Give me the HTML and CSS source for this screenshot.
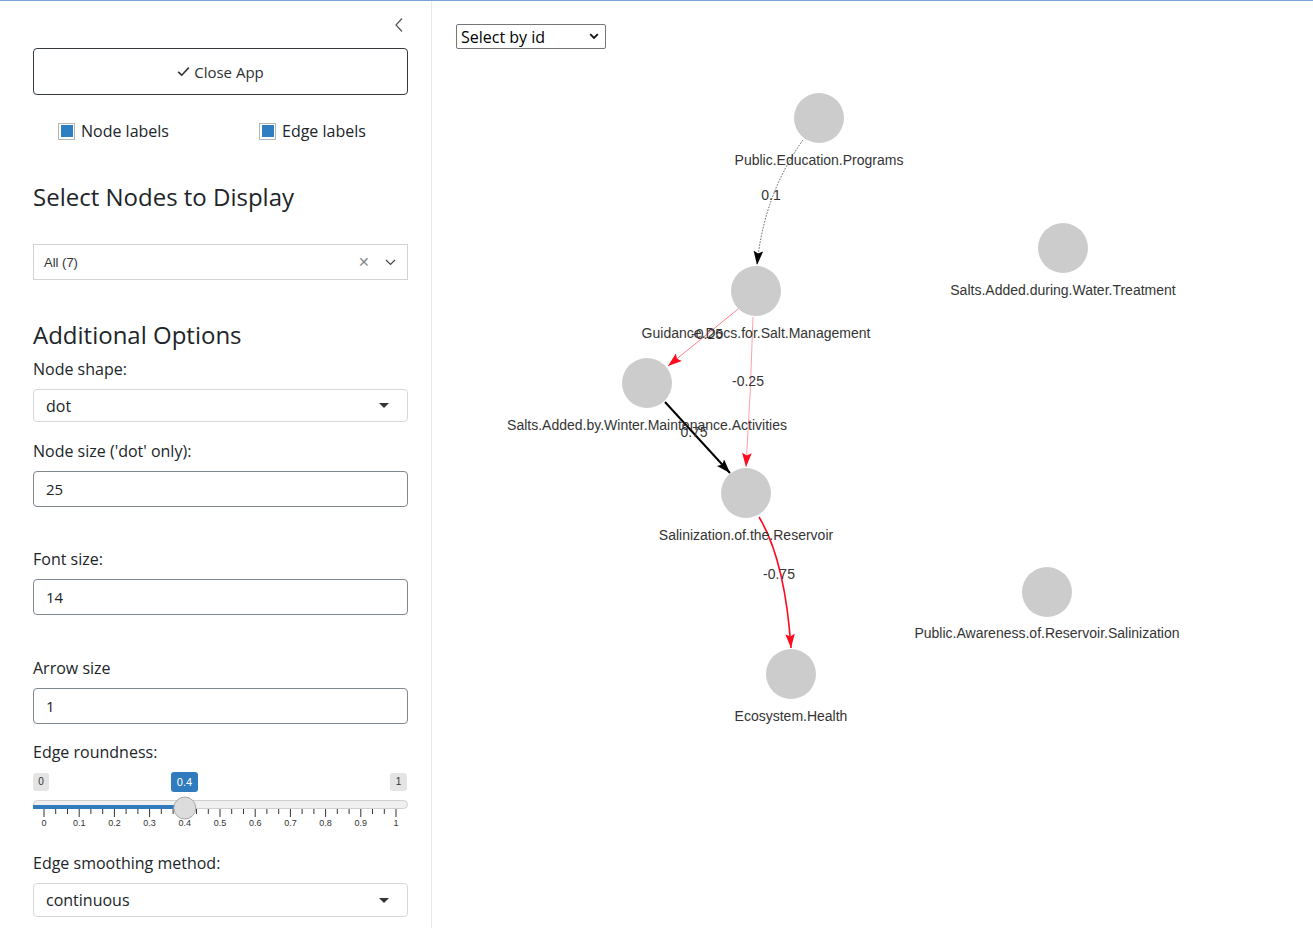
FILE: index.html
```html
<!DOCTYPE html>
<html>
<head>
<meta charset="utf-8">
<title>Network App</title>
<link rel="stylesheet" href="styles.css">
</head>
<body>
<div class="topline"></div>
<div class="app">
  <aside class="sidebar">
    <div class="collapse-row">
      <svg class="chev-left" width="10" height="16" viewBox="0 0 10 16"><path d="M8 1.5 L2 8 L8 14.5" fill="none" stroke="#555" stroke-width="1.2"/></svg>
    </div>
    <button class="btn-close"><svg class="check-ic" width="13" height="11" viewBox="0 0 13 11"><path d="M1.2 5.8 L4.8 9.2 L11.8 1.6" fill="none" stroke="#333" stroke-width="1.6"/></svg>Close App</button>

    <div class="check-row">
      <label class="cb"><span class="cb-box"><span class="cb-fill"></span></span>Node labels</label>
      <label class="cb"><span class="cb-box"><span class="cb-fill"></span></span>Edge labels</label>
    </div>

    <h2 class="heading first">Select Nodes to Display</h2>
    <div class="vselect">
      <span class="vselect-text">All (7)</span>
      <span class="vselect-x">✕</span>
      <svg class="vselect-chev" width="11" height="7" viewBox="0 0 11 7"><path d="M1 1 L5.5 5.5 L10 1" fill="none" stroke="#444" stroke-width="1.2"/></svg>
    </div>

    <h2 class="heading second">Additional Options</h2>

    <div class="lbl lbl-first">Node shape:</div>
    <div class="sel"><span>dot</span><span class="caret"></span></div>

    <div class="lbl lbl-gap-s">Node size ('dot' only):</div>
    <div class="inp">25</div>

    <div class="lbl lbl-gap-l">Font size:</div>
    <div class="inp">14</div>

    <div class="lbl lbl-gap-l2">Arrow size</div>
    <div class="inp">1</div>

    <div class="lbl lbl-gap-m">Edge roundness:</div>
    <div class="slider">
      <svg width="375" height="87" viewBox="0 0 375 87">
        <rect x="0" y="9" width="16" height="18" rx="3" fill="#e4e4e4"/>
        <text x="8" y="21" class="s-tag">0</text>
        <rect x="357" y="9" width="17" height="18" rx="3" fill="#e4e4e4"/>
        <text x="365.5" y="21" class="s-tag">1</text>
        <rect x="138" y="8" width="27" height="20" rx="3" fill="#2f7bbd"/>
        <text x="151.5" y="21.5" class="s-tag s-tag-w">0.4</text>
        <rect x="0.5" y="36.5" width="374" height="8" rx="4" fill="#f0f0f0" stroke="#cfcfcf"/>
        <rect x="0" y="41" width="152" height="4" fill="#2f7bbd"/>
        <g stroke="#333" stroke-width="1">
          <line x1="11" y1="45" x2="11" y2="53"/><line x1="22.7" y1="45" x2="22.7" y2="50"/><line x1="34.5" y1="45" x2="34.5" y2="50"/>
          <line x1="46.2" y1="45" x2="46.2" y2="53"/><line x1="57.9" y1="45" x2="57.9" y2="50"/><line x1="69.7" y1="45" x2="69.7" y2="50"/>
          <line x1="81.4" y1="45" x2="81.4" y2="53"/><line x1="93.1" y1="45" x2="93.1" y2="50"/><line x1="104.9" y1="45" x2="104.9" y2="50"/>
          <line x1="116.6" y1="45" x2="116.6" y2="53"/><line x1="128.3" y1="45" x2="128.3" y2="50"/><line x1="140.1" y1="45" x2="140.1" y2="50"/>
          <line x1="151.8" y1="45" x2="151.8" y2="53"/><line x1="163.5" y1="45" x2="163.5" y2="50"/><line x1="175.3" y1="45" x2="175.3" y2="50"/>
          <line x1="187" y1="45" x2="187" y2="53"/><line x1="198.7" y1="45" x2="198.7" y2="50"/><line x1="210.5" y1="45" x2="210.5" y2="50"/>
          <line x1="222.2" y1="45" x2="222.2" y2="53"/><line x1="233.9" y1="45" x2="233.9" y2="50"/><line x1="245.7" y1="45" x2="245.7" y2="50"/>
          <line x1="257.4" y1="45" x2="257.4" y2="53"/><line x1="269.1" y1="45" x2="269.1" y2="50"/><line x1="280.9" y1="45" x2="280.9" y2="50"/>
          <line x1="292.6" y1="45" x2="292.6" y2="53"/><line x1="304.3" y1="45" x2="304.3" y2="50"/><line x1="316.1" y1="45" x2="316.1" y2="50"/>
          <line x1="327.8" y1="45" x2="327.8" y2="53"/><line x1="339.5" y1="45" x2="339.5" y2="50"/><line x1="351.3" y1="45" x2="351.3" y2="50"/>
          <line x1="363" y1="45" x2="363" y2="53"/>
        </g>
        <g class="s-grid">
          <text x="11" y="62">0</text><text x="46.2" y="62">0.1</text><text x="81.4" y="62">0.2</text>
          <text x="116.6" y="62">0.3</text><text x="151.8" y="62">0.4</text><text x="187" y="62">0.5</text>
          <text x="222.2" y="62">0.6</text><text x="257.4" y="62">0.7</text><text x="292.6" y="62">0.8</text>
          <text x="327.8" y="62">0.9</text><text x="363" y="62">1</text>
        </g>
        <circle cx="151.8" cy="44" r="11" fill="#dcdcdc" stroke="#a8a8a8" stroke-width="1"/>
      </svg>
    </div>

    <div class="lbl">Edge smoothing method:</div>
    <div class="sel sel-last"><span>continuous</span><span class="caret"></span></div>
  </aside>

  <main class="main">
    <div class="idselect">
      <span>Select by id</span>
      <svg class="idselect-chev" width="10" height="7" viewBox="0 0 10 7"><path d="M1.2 1.2 L5 5 L8.8 1.2" fill="none" stroke="#111" stroke-width="1.8"/></svg>
    </div>

    <svg class="graph" width="881" height="927" viewBox="432 1 881 927">
      <defs>
        <marker id="arrK" viewBox="-14 -5 15 10" refX="0" refY="0" markerWidth="15" markerHeight="10" markerUnits="userSpaceOnUse" orient="auto">
          <path d="M0 0 L-14 -4.8 L-11.5 0 L-14 4.8 Z" fill="#000"/>
        </marker>
        <marker id="arrR" viewBox="-14 -5 15 10" refX="0" refY="0" markerWidth="15" markerHeight="10" markerUnits="userSpaceOnUse" orient="auto">
          <path d="M0 0 L-14 -4.8 L-11.5 0 L-14 4.8 Z" fill="#ff0a1e"/>
        </marker>
      </defs>

      <!-- edges -->
      <path d="M803 140 Q764 194 757 265" fill="none" stroke="#222" stroke-width="0.7" stroke-dasharray="1.6 1.4" marker-end="url(#arrK)"/>
      <path d="M738 309 Q705 336 668 366" fill="none" stroke="#ff2a3a" stroke-width="0.6" marker-end="url(#arrR)"/>
      <path d="M753 317 Q751 390 746 467" fill="none" stroke="#ff6070" stroke-width="0.6" marker-end="url(#arrR)"/>
      <path d="M665 402 L730 473" fill="none" stroke="#000" stroke-width="2" marker-end="url(#arrK)"/>
      <path d="M759 517 Q785 560 791 648" fill="none" stroke="#ff0a1e" stroke-width="1.6" marker-end="url(#arrR)"/>

      <!-- nodes -->
      <g fill="#cccccc">
        <circle cx="819" cy="118" r="25"/>
        <circle cx="1063" cy="248" r="25"/>
        <circle cx="756" cy="291" r="25"/>
        <circle cx="647" cy="383" r="25"/>
        <circle cx="746" cy="493" r="25"/>
        <circle cx="1047" cy="592" r="25"/>
        <circle cx="791" cy="674" r="25"/>
      </g>

      <g class="nlabel">
        <text x="819" y="165">Public.Education.Programs</text>
        <text x="1063" y="295">Salts.Added.during.Water.Treatment</text>
        <text x="756" y="338">Guidance.Docs.for.Salt.Management</text>
        <text x="647" y="430">Salts.Added.by.Winter.Maintenance.Activities</text>
        <text x="746" y="540">Salinization.of.the.Reservoir</text>
        <text x="1047" y="638">Public.Awareness.of.Reservoir.Salinization</text>
        <text x="791" y="721">Ecosystem.Health</text>
      </g>
      <g class="nlabel">
        <text x="771" y="200">0.1</text>
        <text x="707" y="339">-0.25</text>
        <text x="748" y="386">-0.25</text>
        <text x="694" y="437">0.75</text>
        <text x="779" y="579">-0.75</text>
      </g>
    </svg>
  </main>
</div>
</body>
</html>
```

FILE: styles.css
```css
html, body {
  margin: 0;
  padding: 0;
  background: #fff;
}
body {
  font-family: "Open Sans", "Noto Sans", sans-serif;
  color: #212529;
  width: 1313px;
  height: 928px;
  overflow: hidden;
}
.topline {
  height: 1px;
  background: #7aa3db;
}
.app {
  display: flex;
  height: 927px;
}
.sidebar {
  width: 432px;
  box-sizing: border-box;
  padding: 0 23px 0 33px;
  border-right: 1px solid #e7e9eb;
  overflow: hidden;
  flex: none;
}
.collapse-row {
  height: 47px;
  display: flex;
  justify-content: flex-end;
  align-items: center;
  padding-right: 4px;
}
.btn-close {
  display: flex;
  align-items: center;
  justify-content: center;
  gap: 4px;
  width: 100%;
  height: 47px;
  box-sizing: border-box;
  background: #fff;
  border: 1px solid #343a40;
  border-radius: 4px;
  font-family: "Open Sans", sans-serif;
  font-size: 15px;
  color: #2b3035;
  padding: 0;
}
.check-row {
  margin-top: 24px;
  display: grid;
  grid-template-columns: 201px 1fr;
  padding-left: 25px;
  height: 24px;
}
.cb {
  display: flex;
  align-items: center;
  gap: 6px;
  font-size: 16px;
  line-height: 24px;
}
.cb-box {
  width: 17px;
  height: 17px;
  box-sizing: border-box;
  border: 1px solid #b5b5b5;
  background: #fff;
  display: flex;
  align-items: center;
  justify-content: center;
}
.cb-fill {
  width: 12px;
  height: 12px;
  background: #2e7fc2;
}
.heading {
  font-size: 24px;
  font-weight: 400;
  line-height: 29px;
  margin: 0;
  color: #212529;
}
.heading.first { margin-top: 39px; }
.heading.second { margin-top: 40px; }
.vselect {
  margin-top: 33px;
  height: 36px;
  box-sizing: border-box;
  border: 1px solid #d3d3d3;
  display: flex;
  align-items: center;
  padding: 0 11px 0 10px;
  font-family: "Liberation Sans", Arial, sans-serif;
  font-size: 13px;
  color: #333;
}
.vselect-text { flex: 1; }
.vselect-x {
  color: #888;
  font-size: 14px;
  margin-right: 15px;
}
.lbl {
  font-size: 16px;
  line-height: 24px;
  margin-top: 0;
  margin-bottom: 8px;
}
.lbl-first { margin-top: 8px; }
.lbl-gap-s { margin-top: 17px; }
.lbl-gap-l { margin-top: 40px; }
.lbl-gap-l2 { margin-top: 41px; }
.lbl-gap-m { margin-top: 16px; margin-bottom: 0; }
.sel {
  height: 33px;
  box-sizing: border-box;
  border: 1px solid #d6d9dc;
  border-radius: 4px;
  display: flex;
  align-items: center;
  justify-content: space-between;
  padding: 0 18px 0 12px;
  font-size: 16px;
}
.sel-last { height: 34px; }
.caret {
  width: 0;
  height: 0;
  border-left: 5px solid transparent;
  border-right: 5px solid transparent;
  border-top: 5px solid #333;
}
.inp {
  height: 36px;
  box-sizing: border-box;
  border: 1px solid #7f878f;
  border-radius: 4px;
  display: flex;
  align-items: center;
  padding-left: 12px;
  font-size: 15px;
}
.slider {
  height: 87px;
}
.slider svg { display: block; }
.s-tag {
  font-family: "Liberation Sans", Arial, sans-serif;
  font-size: 10px;
  fill: #333;
  text-anchor: middle;
}
.s-tag-w { fill: #fff; font-size: 11px; }
.s-grid text {
  font-family: "Liberation Sans", Arial, sans-serif;
  font-size: 9px;
  fill: #333;
  text-anchor: middle;
}
.main {
  flex: 1;
  position: relative;
  padding: 23px 0 0 24px;
}
.idselect {
  position: relative;
  z-index: 2;
  width: 150px;
  height: 25px;
  box-sizing: border-box;
  border: 1px solid #767676;
  border-radius: 2px;
  display: flex;
  align-items: center;
  justify-content: space-between;
  padding: 0 6px 0 4px;
  font-size: 16px;
  color: #000;
  background: #fff;
}
.graph {
  position: absolute;
  left: 0;
  top: 0;
}
.nlabel text {
  font-family: "Liberation Sans", Arial, sans-serif;
  font-size: 14px;
  fill: #343434;
  text-anchor: middle;
}
```
